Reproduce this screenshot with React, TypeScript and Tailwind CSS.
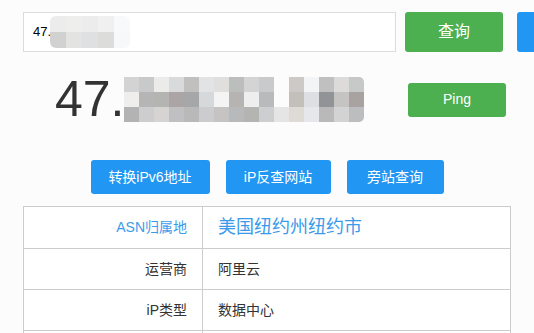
import React from "react";

const font = { fontFamily: '"Liberation Sans", "Noto Sans CJK SC", sans-serif' };

const inputBlur = [
  ["bg-[#ececec]", "bg-[#eeeeed]", "bg-[#ececec]", "bg-[#f0f0f0]", "bg-[#f8f9fa]"],
  ["bg-[#d1d1d1]", "bg-[#e3e3e2]", "bg-[#dfe0e1]", "bg-[#dcdcda]", "bg-[#f7f8f9]"],
];

const bigBlur = [
  ["bg-[#d3d3d3]", "bg-[#c8c9cb]", "bg-[#ebebea]", "bg-[#d9dadc]", "bg-[#c1c0bf]", "bg-[#e2e3e5]", "bg-[#e0dfdd]", "bg-[#bcbdbd]", "bg-[#d4d4d5]", "bg-[#c9cacc]", "bg-[#fcfcfc]", "bg-[#cdc9c6]", "bg-[#f2f4f6]", "bg-[#c0c0c0]", "bg-[#dcdbd9]", "bg-[#c7c8c8]"],
  ["bg-[#efeeec]", "bg-[#b5b5b5]", "bg-[#b4b4b2]", "bg-[#aba6a5]", "bg-[#a5a7a8]", "bg-[#d7d8da]", "bg-[#f4f4f4]", "bg-[#b5b4b2]", "bg-[#eeeeee]", "bg-[#b9babc]", "bg-[#fcfcfc]", "bg-[#c3c0bc]", "bg-[#dddfe2]", "bg-[#929396]", "bg-[#c5c4c3]", "bg-[#a8a3a0]"],
  ["bg-[#b3b3b3]", "bg-[#cdcdcf]", "bg-[#d5d4d2]", "bg-[#c0c0c2]", "bg-[#b9b9b9]", "bg-[#ccccce]", "bg-[#c5c4c2]", "bg-[#b8b9bb]", "bg-[#b4b4b2]", "bg-[#ccced0]", "bg-[#e5e5e5]", "bg-[#dedbd6]", "bg-[#e5e7ea]", "bg-[#b9b9b9]", "bg-[#d3d3d3]", "bg-[#bcbdbf]"],
];

export default function App() {
  return (
    <div className="w-[534px] h-[333px] overflow-hidden bg-[#fcfcfc] text-[#333]" style={font}>
      {/* search row */}
      <div className="flex items-center pt-[12px] pl-[23px] w-[600px]">
        <div className="shrink-0 w-[373px] h-[40px] border border-[#dddddd] bg-white flex items-center pl-[9px]">
          <span className="text-[13px] text-black">47.</span>
          <div className="-ml-[1px] flex flex-col rounded-[6px] overflow-hidden">
            {inputBlur.map((row, i) => (
              <div key={i} className="flex">
                {row.map((c, j) => (
                  <div key={j} className={`w-[16px] h-[16px] ${c}`} />
                ))}
              </div>
            ))}
          </div>
        </div>
        <button className="shrink-0 ml-[9px] w-[98px] h-[40px] rounded-[3px] bg-[#4caf50] text-white text-[16px]">查询</button>
        <button className="shrink-0 ml-[14px] w-[40px] h-[40px] rounded-[3px] bg-[#2196f3]" />
      </div>

      {/* big ip row */}
      <div className="flex items-center mt-[22px] h-[50px]">
        <div className="shrink-0 flex items-center pl-[55px] w-[408px]">
          <span className="text-[50px] leading-[50px] text-[#333]">47.</span>
          <div className="-ml-[1px] flex flex-col rounded-r-[5px] overflow-hidden">
            {bigBlur.map((row, i) => (
              <div key={i} className="flex">
                {row.map((c, j) => (
                  <div key={j} className={`w-[15px] h-[15px] ${c}`} />
                ))}
              </div>
            ))}
          </div>
        </div>
        <button className="shrink-0 w-[98px] h-[34px] rounded-[3px] bg-[#4caf50] text-white text-[14px] mt-[1px]">Ping</button>
      </div>

      {/* action buttons */}
      <div className="flex justify-center gap-[16px] mt-[36px]">
        <button className="shrink-0 w-[119px] h-[34px] rounded-[3px] bg-[#2196f3] text-white text-[14px]">转换iPv6地址</button>
        <button className="shrink-0 w-[105px] h-[34px] rounded-[3px] bg-[#2196f3] text-white text-[14px]">iP反查网站</button>
        <button className="shrink-0 w-[97px] h-[34px] rounded-[3px] bg-[#2196f3] text-white text-[14px]">旁站查询</button>
      </div>

      {/* table */}
      <div className="mt-[12px] ml-[23px] w-[488px] border-t border-l border-r border-[#cccccc] bg-white">
        <div className="flex h-[42px] border-b border-[#cccccc]">
          <div className="shrink-0 w-[179px] border-r border-[#cccccc] flex items-center justify-end pr-[15px] text-[14px] text-[#3b9bea]">ASN归属地</div>
          <div className="flex-1 flex items-center pl-[15px] text-[18px] text-[#3b9bea]">美国纽约州纽约市</div>
        </div>
        <div className="flex h-[41px] border-b border-[#cccccc]">
          <div className="shrink-0 w-[179px] border-r border-[#cccccc] flex items-center justify-end pr-[15px] text-[14px]">运营商</div>
          <div className="flex-1 flex items-center pl-[15px] text-[14px]">阿里云</div>
        </div>
        <div className="flex h-[41px] border-b border-[#cccccc]">
          <div className="shrink-0 w-[179px] border-r border-[#cccccc] flex items-center justify-end pr-[15px] text-[14px]">iP类型</div>
          <div className="flex-1 flex items-center pl-[15px] text-[14px]">数据中心</div>
        </div>
        <div className="flex h-[41px] border-b border-[#cccccc]">
          <div className="shrink-0 w-[179px] border-r border-[#cccccc]" />
          <div className="flex-1" />
        </div>
      </div>
    </div>
  );
}
